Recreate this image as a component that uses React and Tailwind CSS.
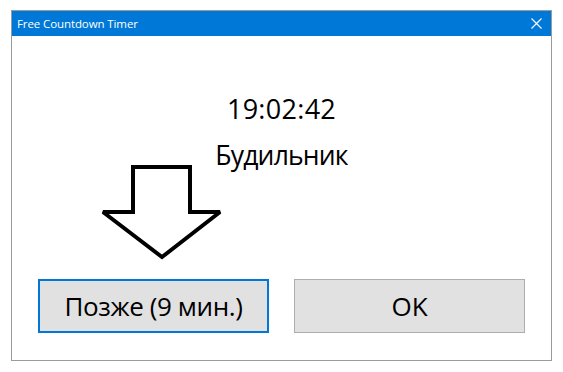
export default function App() {
  return (
    <div
      className="w-[563px] h-[372px] bg-white pt-[10px] pl-[11px]"
      style={{ fontFamily: '"Open Sans", "Noto Sans", sans-serif' }}
    >
      <div className="w-[541px] h-[351px] border border-[#9b9b9b] flex flex-col">
        <div className="h-[25px] bg-[#0078d7] flex items-center justify-between pl-[5px] pr-[9px] text-white">
          <span className="text-[11.5px] leading-none tracking-[-0.1px]">Free Countdown Timer</span>
          <svg width="11" height="11" viewBox="0 0 11 11">
            <path d="M0.5 0.5 L10.5 10.5 M10.5 0.5 L0.5 10.5" stroke="white" strokeWidth="1.1" />
          </svg>
        </div>
        <div className="relative flex-1 bg-white flex flex-col items-center text-black">
          <div className="mt-[59px] text-[27px] leading-none tracking-[0.3px]">19:02:42</div>
          <div className="mt-[20px] text-[26.5px] leading-none tracking-[-0.8px]">Будильник</div>
          <svg
            className="absolute left-[88px] top-[128px]"
            width="124"
            height="97"
            viewBox="0 0 124 97"
          >
            <polygon
              points="33,3 90,3 90,48 120,48 62,93 3,48 33,48"
              fill="white"
              stroke="black"
              strokeWidth="4"
              strokeLinejoin="miter"
              strokeMiterlimit="2"
            />
          </svg>
          <div className="mt-auto mb-[27px] w-full flex gap-[25px] pl-[26px] pr-[24px]">
            <button className="w-[231px] h-[54px] bg-[#e1e1e1] border-2 border-[#0078d7] text-[26px] tracking-[-0.4px]">
              Позже (9 мин.)
            </button>
            <button className="w-[231px] h-[54px] bg-[#e1e1e1] border border-[#adadad] text-[26px]">
              OK
            </button>
          </div>
        </div>
      </div>
    </div>
  );
}
